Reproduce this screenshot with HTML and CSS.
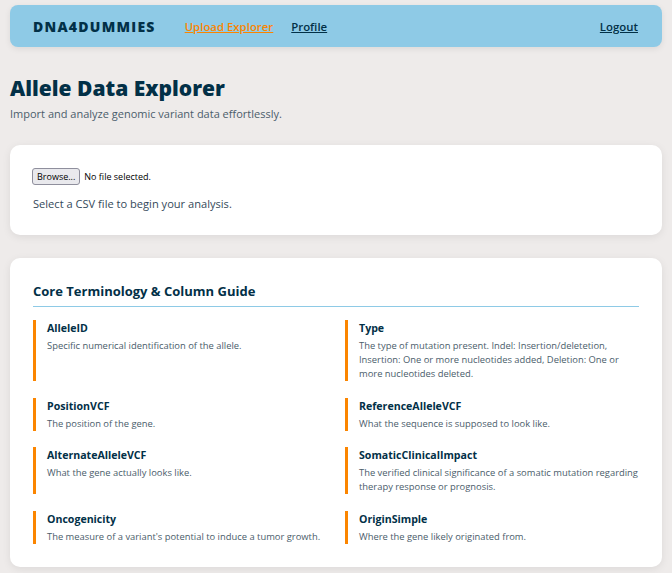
FILE: index.html
```html
<!DOCTYPE html>
<html lang="en">
<head>
<meta charset="utf-8">
<title>Allele Data Explorer</title>
<link rel="stylesheet" href="styles.css">
</head>
<body>
<nav class="navbar">
  <span class="logo">DNA4DUMMIES</span>
  <a class="nav-link active" href="#">Upload Explorer</a>
  <a class="nav-link" href="#">Profile</a>
  <a class="nav-link logout" href="#">Logout</a>
</nav>

<header class="page-head">
  <h1 class="page-title">Allele Data Explorer</h1>
  <p class="page-sub">Import and analyze genomic variant data effortlessly.</p>
</header>

<section class="card upload-card">
  <div class="file-row">
    <button class="browse-btn" type="button">Browse...</button>
    <span class="file-status">No file selected.</span>
  </div>
  <p class="upload-hint">Select a CSV file to begin your analysis.</p>
</section>

<section class="card guide-card">
  <h2 class="guide-title">Core Terminology &amp; Column Guide</h2>
  <div class="guide-grid">
    <div class="term">
      <div class="term-name">AlleleID</div>
      <div class="term-desc">Specific numerical identification of the allele.</div>
    </div>
    <div class="term">
      <div class="term-name">Type</div>
      <div class="term-desc">The type of mutation present. Indel: Insertion/deletetion, Insertion: One or more nucleotides added, Deletion: One or more nucleotides deleted.</div>
    </div>
    <div class="term">
      <div class="term-name">PositionVCF</div>
      <div class="term-desc">The position of the gene.</div>
    </div>
    <div class="term">
      <div class="term-name">ReferenceAlleleVCF</div>
      <div class="term-desc">What the sequence is supposed to look like.</div>
    </div>
    <div class="term">
      <div class="term-name">AlternateAlleleVCF</div>
      <div class="term-desc">What the gene actually looks like.</div>
    </div>
    <div class="term">
      <div class="term-name">SomaticClinicalImpact</div>
      <div class="term-desc">The verified clinical significance of a somatic mutation regarding therapy response or prognosis.</div>
    </div>
    <div class="term">
      <div class="term-name">Oncogenicity</div>
      <div class="term-desc">The measure of a variant's potential to induce a tumor growth.</div>
    </div>
    <div class="term">
      <div class="term-name">OriginSimple</div>
      <div class="term-desc">Where the gene likely originated from.</div>
    </div>
  </div>
</section>
</body>
</html>
```

FILE: styles.css
```css
* { box-sizing: border-box; }

body {
  margin: 0;
  padding: 5px 10px 10px;
  background: #eeebea;
  font-family: "Open Sans", "Noto Sans", sans-serif;
  color: #023047;
}

.navbar {
  display: flex;
  align-items: center;
  height: 42px;
  padding: 0 24px 0 23px;
  background: #8ecae6;
  border-radius: 8px;
  box-shadow: 0 2px 6px rgba(0, 0, 0, 0.08);
}

.logo {
  font-size: 14px;
  font-weight: 800;
  letter-spacing: 1.25px;
  color: #023047;
  margin-right: 29px;
}

.nav-link {
  font-size: 11.4px;
  font-weight: 600;
  color: #023047;
  text-decoration: underline;
  margin-right: 18px;
}

.nav-link.active { color: #fb8500; }

.nav-link.logout {
  margin-left: auto;
  margin-right: 0;
}

.page-head { margin: 26px 0 23px; }

.page-title {
  margin: 0;
  font-size: 21px;
  line-height: 30px;
  font-weight: 800;
  color: #023047;
}

.page-sub {
  margin: 3px 0 0;
  font-size: 11px;
  line-height: 16px;
  color: #4b5d6b;
}

.card {
  background: #ffffff;
  border-radius: 10px;
  padding: 23px;
  box-shadow: 0 2px 8px rgba(0, 0, 0, 0.08);
}

.upload-card { margin-bottom: 23px; }

.file-row {
  display: flex;
  align-items: center;
  height: 17px;
}

.browse-btn {
  font-family: "Open Sans", sans-serif;
  font-size: 9px;
  height: 17px;
  padding: 0 4px;
  margin: 0 4px 0 -1px;
  color: #000;
  background: #e9e9ed;
  border: 1px solid #8f8f9d;
  border-radius: 3px;
}

.file-status {
  font-size: 9px;
  color: #000;
}

.upload-hint {
  margin: 11px 0 0;
  font-size: 11.1px;
  line-height: 16px;
  color: #34495a;
}

.guide-card { padding-bottom: 23px; }

.guide-title {
  margin: 0 0 13px;
  padding-bottom: 5px;
  font-size: 13px;
  line-height: 20px;
  font-weight: 700;
  color: #023047;
  border-bottom: 1px solid #8ecae6;
}

.guide-grid {
  display: grid;
  grid-template-columns: 1fr 1fr;
  column-gap: 18px;
  row-gap: 16.5px;
}

.term {
  border-left: 3px solid #fb8500;
  padding-left: 11px;
}

.term-name {
  font-size: 10.6px;
  line-height: 16px;
  font-weight: 700;
  color: #023047;
  margin-bottom: 3px;
}

.term-desc {
  font-size: 9.4px;
  line-height: 14px;
  color: #4b5d6b;
}
```
